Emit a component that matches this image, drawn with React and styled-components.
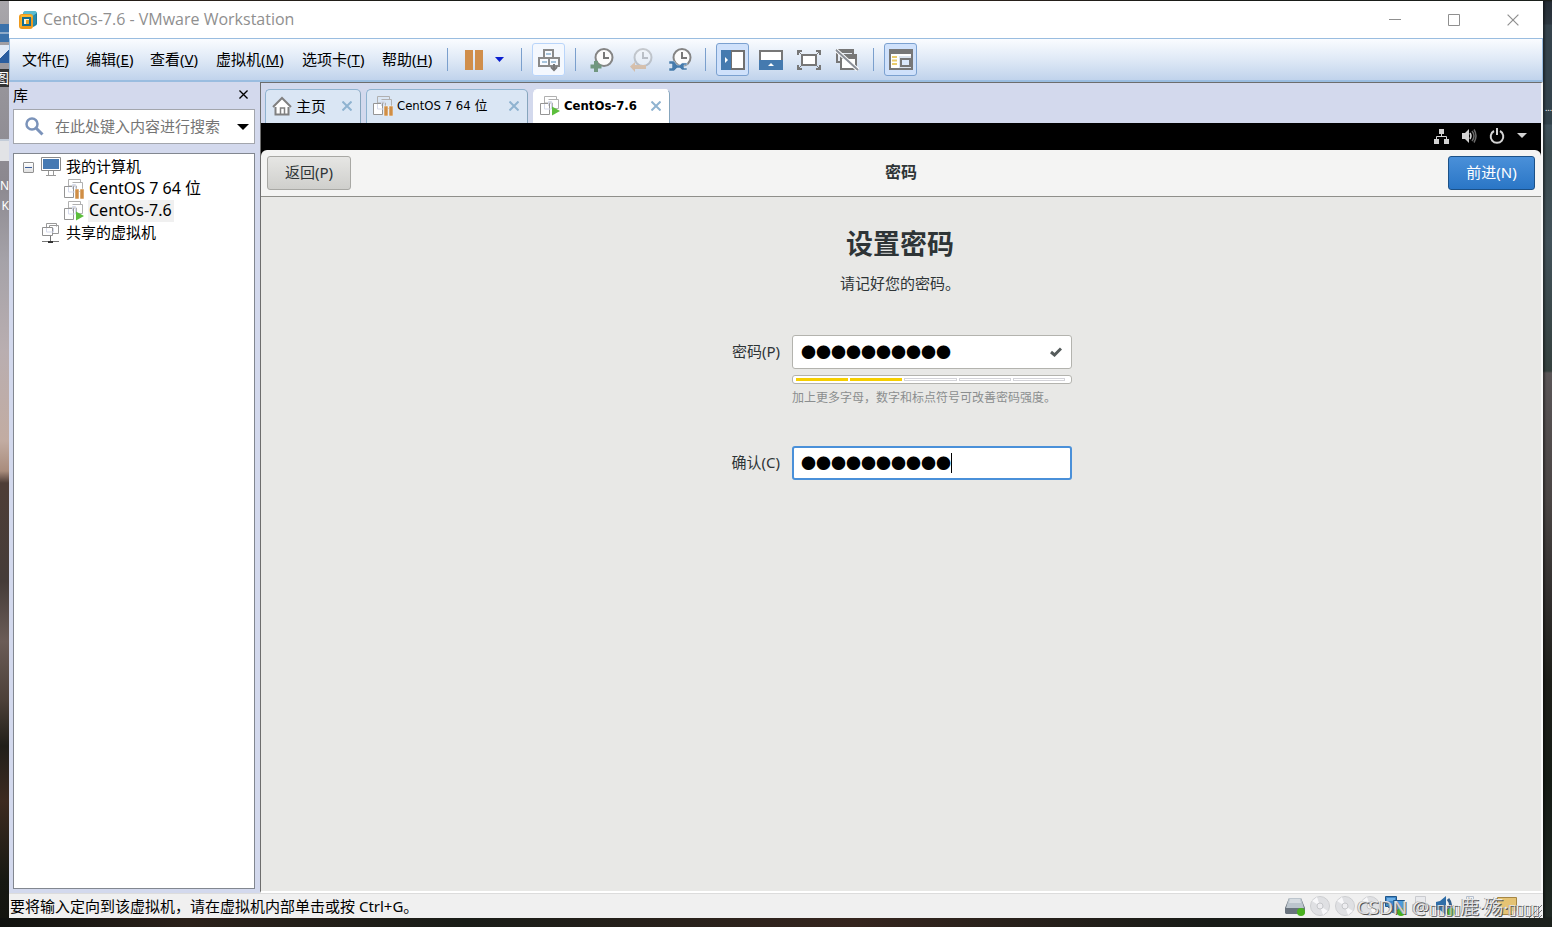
import React from 'react';
import styled, { createGlobalStyle, css } from 'styled-components';

const ui = `"Noto Sans", "Noto Sans CJK SC", sans-serif`;
const tabFont = `"DejaVu Sans Condensed", "Noto Sans CJK SC", sans-serif`;

const GlobalStyle = createGlobalStyle`
  *, *::before, *::after { box-sizing: border-box; }
  body { margin: 0; font: 15px/20px ${ui}; color: #000; }
  button, input { font: inherit; color: inherit; margin: 0; }
  svg { display: block; flex: none; }
`;

const Desktop = styled.div`
  display: flex;
  min-height: 100vh;
  padding: 1px 0 9px;
  background: linear-gradient(90deg, #10120f 0%, #2b211a 12%, #191c17 30%, #35251e 55%, #181b17 78%, #1c211d 100%);
`;

const LeftStrip = styled.div`
  position: relative;
  flex: none;
  width: 9px;
  overflow: hidden;
  background: linear-gradient(180deg, #a9a7ab 0, #96949a 90px, #8b888f 180px, #a5a2a8 260px, #b9aeb0 350px, #c2aca2 440px, #a98c7c 470px,
    #4e3d37 482px, #453c38 580px, #6b5c57 640px, #4c4038 700px, #211f19 745px, #3d2a20 800px, #161812 880px, #14150f 100%);
`;

const RightStrip = styled.div`
  position: relative;
  flex: none;
  width: 9px;
  overflow: hidden;
  background: linear-gradient(180deg, #252d36 0, #2d3740 23px, #35434c 24px, #33434c 123px, #40515b 124px, #3b4b4f 152px,
    #42525a 240px, #35413f 370px, #5a5557 372px, #4a4544 500px, #33302f 590px, #1d1e19 680px, #151b15 780px, #1f2823 100%);
  box-shadow: inset 2px 0 2px rgba(0, 0, 0, .4);
`;

const Fragment = styled.span`
  position: absolute;
  right: 0;
  top: ${p => p.$top}px;
  font-size: ${p => p.$size || 12}px;
  line-height: 18px;
  color: #fff;
  background: ${p => p.$bg || 'none'};
`;

const Patch = styled.span`
  position: absolute;
  left: 0;
  top: ${p => p.$top}px;
  width: 9px;
  height: ${p => p.$height}px;
  background: ${p => p.$fill};
`;

const Window = styled.main`
  display: flex;
  flex: 1;
  flex-direction: column;
  min-width: 0;
  background: #f0f0f0;
`;

const TitleBar = styled.header`
  display: flex;
  align-items: center;
  height: 37px;
  padding: 0 3px 0 9px;
  gap: 5px;
  background: #fff;
  color: #8f8f8f;
`;

const Title = styled.h1`
  flex: 1;
  margin: 0;
  padding-bottom: 2px;
  font: 400 16px/20px "Open Sans", ${ui};
`;

const CaptionButton = styled.button`
  display: grid;
  place-items: center;
  width: 54px;
  height: 36px;
  padding: 0;
  border: 0;
  background: none;
`;

const MenuBar = styled.nav`
  display: flex;
  align-items: center;
  height: 44px;
  padding-left: 12px;
  border: solid #9abde0;
  border-width: 1px 1px 2px 1px;
  background: linear-gradient(#fafcff, #dfe9f6 50%, #c0d3ec);
`;

const Menus = styled.div`
  display: flex;
  gap: 16px;
`;

const MenuButton = styled.button`
  width: ${p => p.$width}px;
  padding: 0 0 2px;
  border: 0;
  background: none;
  text-align: left;
  white-space: nowrap;
`;

const Separator = styled.span`
  flex: none;
  width: 1px;
  height: 23px;
  margin: 0 ${p => p.$after}px 0 ${p => p.$before}px;
  background: #7a9fcd;
`;

const ToolGroup = styled.div`
  display: flex;
  gap: ${p => p.$gap}px;
`;

const ToolButton = styled.button`
  display: grid;
  place-items: center;
  width: ${p => p.$width || 33}px;
  height: 33px;
  padding: 0;
  border: 1px solid transparent;
  border-radius: 3px;
  background: none;
  ${p => p.$look === 'hover' && css`border-color: #b9d5fa; background: #f4f8fe;`}
  ${p => p.$look === 'on' && css`border-color: #7ba1d0; background: #cfe1fb;`}
`;

const Body = styled.div`
  display: flex;
  flex: 1;
`;

const Sidebar = styled.aside`
  display: flex;
  flex: none;
  flex-direction: column;
  width: 251px;
  padding: 0 5px 4px 4px;
  background: #d3d9ed;
`;

const SidebarHead = styled.div`
  display: flex;
  align-items: center;
  justify-content: space-between;
  height: 27px;
  padding: 0 7px 2px 0;
`;

const PlainButton = styled.button`
  display: grid;
  place-items: center;
  flex: none;
  padding: 0;
  border: 0;
  background: none;
`;

const SearchBox = styled.label`
  display: flex;
  align-items: center;
  height: 35px;
  padding: 0 5px 0 11px;
  gap: 11px;
  border: 1px solid #a3a6ad;
  background: #fff;
`;

const SearchInput = styled.input`
  flex: 1;
  min-width: 0;
  padding: 0 0 2px;
  border: 0;
  outline: 0;
  background: none;
  &::placeholder { color: #757575; opacity: 1; }
`;

const Tree = styled.ul`
  flex: 1;
  margin: 9px 0 0;
  padding: 2px 0 0 9px;
  border: 1px solid #828790;
  background: #fff;
  list-style: none;
`;

const Branch = styled.ul`
  margin: 0;
  padding: 0;
  list-style: none;
`;

const TreeRow = styled.div`
  display: flex;
  align-items: center;
  height: 22px;
  gap: 4px;
  padding-left: ${p => p.$indent}px;
`;

const TreeLabel = styled.span`
  padding: 0 2px 2px 1px;
  font-size: ${p => (p.$latin ? 16 : 15)}px;
  white-space: nowrap;
  background: ${p => (p.$selected ? '#f0f0f0' : 'none')};
`;

const Expander = styled.button`
  display: grid;
  place-items: center;
  width: 11px;
  height: 11px;
  margin-right: 3px;
  padding: 0;
  border: 1px solid #919191;
  border-radius: 1px;
  background: linear-gradient(#fff, #e0e0e0);
  &::after { content: ''; width: 7px; height: 1px; background: #3d5f9c; }
`;

const Workspace = styled.section`
  display: flex;
  flex: 1;
  flex-direction: column;
  min-width: 0;
  border: solid #6d6d6d;
  border-width: 1px 2px 2px 1px;
  border-right-color: #f8f8f8;
  border-bottom-color: #fff;
  background: #d3d9ed;
`;

const Tabs = styled.div`
  display: flex;
  align-items: flex-end;
  height: 40px;
  padding-left: 4px;
  gap: 5px;
`;

const Tab = styled.div`
  display: flex;
  align-items: center;
  width: ${p => p.$width}px;
  height: 34px;
  padding: 0 8px 2px 6px;
  border: 1px solid ${p => (p.$active ? '#fff' : '#8eb2cf')};
  border-right-color: #86a5bd;
  border-bottom: 0;
  border-radius: 5px 5px 0 0;
  background: ${p => (p.$active ? '#fff' : '#dae6f4')};
`;

const TabLabel = styled.button`
  display: flex;
  align-items: center;
  flex: 1;
  padding: 0;
  gap: 4px;
  border: 0;
  background: none;
  font-family: ${p => (p.$cjk ? ui : tabFont)};
  font-size: ${p => (p.$cjk ? 15 : 13)}px;
  font-weight: ${p => (p.$bold ? 700 : 400)};
  white-space: nowrap;
`;

const Guest = styled.div`
  display: flex;
  flex: 1;
  flex-direction: column;
  background: #e8e8e6;
  color: #2e3436;
`;

const GuestPanel = styled.div`
  display: flex;
  align-items: center;
  justify-content: flex-end;
  height: 27px;
  padding: 0 14px 2px 0;
  gap: 12px;
  background: #000;
`;

const HeaderWrap = styled.div`
  background: #000;
`;

const HeaderBar = styled.div`
  display: grid;
  grid-template-columns: 1fr auto 1fr;
  align-items: center;
  height: 47px;
  padding: 0 6px;
  border-bottom: 1px solid #8f8f8a;
  border-radius: 6px 6px 0 0;
  background: #f4f4f3;
`;

const HeaderTitle = styled.h2`
  margin: 0;
  padding-bottom: 2px;
  font-size: 16px;
  line-height: 20px;
`;

const PushButton = styled.button`
  justify-self: ${p => (p.$primary ? 'end' : 'start')};
  width: ${p => (p.$primary ? 87 : 84)}px;
  height: 34px;
  padding: 0 0 2px;
  border: 1px solid ${p => (p.$primary ? '#1c5187' : '#a8a8a4')};
  border-radius: 3px;
  background: ${p => (p.$primary ? 'linear-gradient(#4a90d9, #2a76c6)' : 'linear-gradient(#e6e6e4, #cfcfcc)')};
  color: ${p => (p.$primary ? '#fff' : '#2e3436')};
`;

const Form = styled.form`
  display: flex;
  flex: 1;
  flex-direction: column;
  align-items: center;
  padding: 27px 2px 0 0;
`;

const Heading = styled.h3`
  margin: 0;
  font-size: 27px;
  line-height: 40px;
`;

const Lead = styled.p`
  margin: 9px 0 42px;
  line-height: 20px;
`;

const Fields = styled.div`
  display: grid;
  grid-template-columns: 52px 280px;
  column-gap: 12px;
  align-items: center;
`;

const FieldLabel = styled.label`
  justify-self: end;
  padding-bottom: 2px;
  white-space: nowrap;
`;

const Entry = styled.div`
  position: relative;
  display: flex;
  align-items: center;
  height: 34px;
  padding: 0 9px 0 ${p => (p.$focus ? 7 : 8)}px;
  border: ${p => (p.$focus ? '2px solid #4a90d9' : '1px solid #b3b3ae')};
  border-radius: 3px;
  background: #fff;
`;

const Secret = styled.input`
  flex: 1;
  min-width: 0;
  padding: 0;
  border: 0;
  outline: 0;
  background: none;
  color: #000;
  font: 15px/20px "Noto Sans CJK SC", sans-serif;
`;

const Caret = styled.span`
  position: absolute;
  left: 157px;
  top: 5px;
  width: 1px;
  height: 20px;
  background: #000;
`;

const Strength = styled.div`
  display: flex;
  grid-column: 2;
  height: 9px;
  margin-top: 6px;
  padding: 2px 6px 2px 3px;
  gap: 2px;
  border: 1px solid #b3b3ae;
  border-radius: 3px;
  background: #fff;
`;

const Step = styled.span`
  flex: 1;
  height: 3px;
  border: 1px solid ${p => (p.$on ? '#f5ce00' : '#d3d3d8')};
  background: ${p => (p.$on ? '#f5ce00' : '#fff')};
`;

const Hint = styled.p`
  grid-column: 2;
  margin: 5px 0 39px;
  font-size: 12px;
  line-height: 18px;
  color: #8b8e8f;
  white-space: nowrap;
`;

const StatusBar = styled.footer`
  display: flex;
  align-items: center;
  justify-content: space-between;
  position: relative;
  height: 25px;
  padding: 0 1px;
  border-top: 1px solid #dcdcdc;
  background: #f0f0f0;
`;

const Devices = styled.div`
  display: flex;
  flex: 1;
  justify-content: flex-end;
  align-items: center;
  margin-right: 17px;
  gap: 5px;
`;

const Grip = styled.div`
  align-self: flex-end;
  margin-left: 12px;
`;

const Watermark = styled.span`
  position: absolute;
  right: 4px;
  top: 1px;
  font: 19px/24px "Open Sans", "Noto Sans CJK SC", "DejaVu Sans", sans-serif;
  color: rgba(255, 255, 255, .75);
  text-shadow: 1px 1px 0 #555, -1px 0 0 #aaa;
  white-space: nowrap;
`;

const Boxes = styled.span`
  font-size: 14px;
`;

const Logo = () => (
  <svg width="20" height="20" viewBox="0 0 20 20">
    <rect x="5" y="1" width="14" height="15" rx="3" fill="#38a0bd" />
    <path d="M5 4 7 1h10l2 2v10l-3 4" fill="#5cbcd0" />
    <path d="M15 6v11l4-3V3z" fill="#1e7898" />
    <rect x="1" y="4" width="14" height="15" rx="3" fill="#ef9a1c" />
    <path d="M3 5h10l2 2-2 1H5v8l-3 1z" fill="#fbb62c" />
    <path d="M15 6v10l3-2V4z" fill="#2b8cab" />
    <path d="M5 8h7v7H5z" fill="#fff6d8" stroke="#146d91" strokeWidth="2" />
    <path d="M8 10h3v4H8z" fill="#efa726" />
  </svg>
);

const VmIcon = ({ state }) => (
  <svg width="20" height="20" viewBox="0 0 20 20" fill="none">
    <path d="M4.500 7V.5h12v3M8.500 3.500h10v9h-6M4.500 7h8v7" stroke="#b0b0b0" />
    <path d="M.5 7.500h9v11H.5z" fill="#fff" stroke="#959595" />
    <path d="M4.500 8v5h7V5.500h-3V10" stroke="#d5daeb" />
    {state === 'paused' && <path d="M11 10h4v10h-4zM16 10h4v10h-4z" fill="#d08e45" stroke="#fff" strokeWidth=".5" />}
    {state === 'running' && <path d="M12 10.500v9l8-4.500z" fill="#5cbe3c" />}
  </svg>
);

const SharedIcon = () => (
  <svg width="20" height="20" viewBox="0 0 20 20" fill="none">
    <path d="M5.500 4V.5h10v3" stroke="#999" />
    <path d="M8.500 2.500h9v8h-9z" stroke="#999" />
    <path d="M1.500 4.500h10v8h-10z" fill="#fff" stroke="#909090" />
    <path d="M5.500 5v4h7V5" stroke="#d5daeb" />
    <path d="M9.500 13v5M1 18.500h17" stroke="#777" />
    <path d="M7 18h5v2H7z" fill="#333" />
  </svg>
);

const MonitorIcon = () => (
  <svg width="20" height="20" viewBox="0 0 20 20">
    <path d="M.5.5h19v13H.5z" fill="#fff" stroke="#8a8a8a" />
    <path d="M2 2h16v10H2z" fill="#4679b2" />
    <path d="M7.500 14v4M12.500 14v4M5 18.500h10" stroke="#999" />
  </svg>
);

const HomeIcon = () => (
  <svg width="20" height="20" viewBox="0 0 20 20" fill="none" stroke="#808080">
    <path d="M3.500 10v8.500h13V10" fill="#fff" strokeWidth="2" />
    <path d="M1 11 10 2l9 9" fill="#fff" strokeWidth="2" />
    <path d="M8.500 18v-6h4v6" strokeWidth="1.500" />
  </svg>
);

const CloseGlyph = ({ size = 10, color = '#8fb3d0', w = 2 }) => (
  <svg width={size} height={size} viewBox="0 0 10 10" stroke={color} strokeWidth={w}><path d="m.5.5 9 9m0-9-9 9" /></svg>
);

const Clock = ({ kind }) => (
  <svg width="24" height="24" viewBox="0 0 24 24" fill="none" opacity={kind === 'revert' ? 0.38 : 1}>
    <circle cx="14" cy="9.500" r="8.500" fill="#fbfbfb" stroke="#858585" strokeWidth="2" />
    <path d="M14 4v6h5" stroke="#777" strokeWidth="2" />
    {kind === 'take' && <path d="M6 13v11M.5 18.500h11" stroke="#719780" strokeWidth="4" />}
    {kind === 'revert' && <path d="m1 18.500 5-4.500v3h11v4H6v3z" fill="#d88a3d" />}
    {kind === 'manage' && <path d="M1 13h5l3 4h3l2-2h5v2h-3v3h3v2h-5l-2-2H9l-3 3H1v-3h3v-4H1z" fill="#467bac" stroke="#dfe9f6" strokeWidth=".5" />}
  </svg>
);

const SendKeys = () => (
  <svg width="22" height="24" viewBox="0 0 22 24" fill="#f9fbff" stroke="#8a8a8a" strokeWidth="2">
    <path d="M6 2h9v8H6zM1 10h10v8H1zM11 10h10v8H11z" />
    <path d="M8 6h5M4 14h5M13 14h5" stroke="#a7c4dc" />
    <path d="M16 16v6m-3-3 3 3 3-3" fill="none" stroke="#777" />
  </svg>
);

const SidePanelIcon = () => (
  <svg width="24" height="20" viewBox="0 0 24 20">
    <path d="M1 1h22v18H1z" fill="#fff" stroke="#707070" strokeWidth="2" />
    <path d="M0 0h10v20H0z" fill="#457aaf" /><path d="M10.500 1v18" stroke="#707070" />
    <path d="m4 7 3 3-3 3z" fill="#fff" />
  </svg>
);

const ThumbBarIcon = () => (
  <svg width="24" height="20" viewBox="0 0 24 20">
    <path d="M1 1h22v18H1z" fill="#fff" stroke="#777" strokeWidth="2" />
    <path d="M0 10h24v10H0z" fill="#457aaf" /><path d="m9 16 3-3 3 3z" fill="#fff" />
  </svg>
);

const FullScreenIcon = () => (
  <svg width="24" height="20" viewBox="0 0 24 20" fill="none" stroke="#777" strokeWidth="2">
    <path d="M5 5h14v10H5z" fill="#fff" />
    <path d="M1 5V1h4M19 1h4v4M23 15v4h-4M5 19H1v-4" />
    <path d="m1 1 4 4M23 1l-4 4M1 19l4-4M23 19l-4-4" strokeWidth="1" />
  </svg>
);

const UnityIcon = () => (
  <svg width="24" height="22" viewBox="0 0 24 22" fill="none">
    <path d="M2 1h16v12H2z" fill="#e5eaf2" stroke="#777" strokeWidth="2" /><path d="M1 0h18v4H1z" fill="#777" />
    <path d="M6 7h15v13H6z" fill="#fff" stroke="#777" strokeWidth="2" /><path d="M5 5h17v5H5z" fill="#777" />
    <path d="m1 1 22 20" stroke="#fff" strokeWidth="4" /><path d="m1 1 22 20" stroke="#8a8f98" strokeWidth="2" />
  </svg>
);

const ConsoleIcon = () => (
  <svg width="24" height="21" viewBox="0 0 24 21" fill="none">
    <path d="M1 1h22v19H1z" fill="#fff" stroke="#777" strokeWidth="2" /><path d="M0 0h24v5H0z" fill="#777" />
    <path d="M3 8h5M3 11.500h5M3 15h5" stroke="#eacb6b" strokeWidth="2" />
    <path d="M10 7h12v12H10z" fill="#dce4ef" /><path d="M12 10h9v7h-9z" fill="#dbe8fb" stroke="#777" strokeWidth="2" />
  </svg>
);

const NetworkIcon = () => (
  <svg width="16" height="16" viewBox="0 0 16 16"><path d="M6 1h5v5H6zM1 11h5v5H1zM11 11h5v5h-5z" fill="#d3d3d3" /><path d="M8.500 5v4M3.500 11V8.500h10V11" fill="none" stroke="#d3d3d3" /></svg>
);
const VolumeIcon = () => (
  <svg width="16" height="16" viewBox="0 0 16 16" fill="none"><path d="M1 5h3l4-4v14l-4-4H1z" fill="#d3d3d3" /><path d="M9 5q2 3 0 6" stroke="#d3d3d3" strokeWidth="1.500" /><path d="M11 3q4 5 0 10M13 1.500q4 6.500 0 13" stroke="#6b6b6b" strokeWidth="1.500" /></svg>
);
const PowerIcon = () => (
  <svg width="16" height="16" viewBox="0 0 16 16" fill="none" stroke="#d3d3d3" strokeWidth="2"><path d="M5 3a6.300 6.300 0 1 0 6 0M8 0v7" /></svg>
);
const Down = ({ w, h, color }) => (
  <svg width={w} height={h} viewBox="0 0 10 5" preserveAspectRatio="none"><path d="M0 0h10L5 5z" fill={color} /></svg>
);

const Disk = () => (
  <svg width="20" height="20" viewBox="0 0 20 20"><path d="M4 2h12l4 10v5l-1 1H1l-1-1v-5z" fill="#69737d" /><path d="M4 2h12l3 10H1z" fill="#bcc5cd" /><path d="M5 3h10l1 4H4z" fill="#d6dce1" /><circle cx="16" cy="16" r="4" fill="#49b01f" /></svg>
);
const Disc = () => (
  <svg width="20" height="20" viewBox="0 0 20 20"><circle cx="10" cy="10" r="9.500" fill="#dfe0e3" stroke="#cdced1" /><path d="M10 10 2 5l5-4zM10 10l8 5-5 4z" fill="#f8f8fa" /><circle cx="10" cy="10" r="3" fill="#ededf0" stroke="#c6c7cb" /></svg>
);
const Net = () => (
  <svg width="20" height="20" viewBox="0 0 20 20"><path d="M.5.5h11v10H.5z" fill="#3f86c7" stroke="#1f568a" /><path d="M2 2h8v3H2z" fill="#6fb0e6" /><path d="M3 11h5v5h3" stroke="#4d6c8c" strokeWidth="2" fill="none" /><path d="M8.500 4.500h11v10h-11z" fill="#4e9bdc" stroke="#1f568a" /><path d="M10 17h8" stroke="#567" strokeWidth="2" /><circle cx="16" cy="16" r="4" fill="#49b01f" /></svg>
);
const Printer = () => (
  <svg width="20" height="20" viewBox="0 0 20 20" fill="#e9eaed" stroke="#cacbcf"><path d="M5.500.5h10v8h-10zM2.500 8.500h15v7h-15zM5.500 12.500h10v6h-10z" /></svg>
);
const Sound = () => (
  <svg width="20" height="20" viewBox="0 0 20 20"><path d="M5 5 11 0v19l-6-5H1V6z" fill="#2f6ea8" /><path d="M13 3q5 6 0 12" stroke="#34608c" strokeWidth="3" fill="none" /><circle cx="16" cy="16" r="4" fill="#49b01f" /></svg>
);
const Usb = () => (
  <svg width="20" height="20" viewBox="0 0 20 20"><path d="M6.500.5h7v6h-7z" fill="#eef1f6" stroke="#b6bfcc" /><path d="M5.500 6.500h10v13h-10z" fill="#cad5e4" stroke="#a2b0c4" /></svg>
);
const Note = () => (
  <svg width="20" height="18" viewBox="0 0 20 18"><path d="M.5.5h19v13l-4 4H.5z" fill="#e5c374" stroke="#a68644" /><path d="M15 18v-4h5" fill="#f6e0a6" /></svg>
);

const menus = [['文件', 'F', 48], ['编辑', 'E', 48], ['查看', 'V', 50], ['虚拟机', 'M', 70], ['选项卡', 'T', 64], ['帮助', 'H', 52]];
const dots = '●'.repeat(10);

export default function App() {
  return (
    <>
      <GlobalStyle />
      <Desktop>
        <LeftStrip aria-hidden="true">
          <Patch $top={23} $height={18} $fill="linear-gradient(#3b72ab 0 8px, #8eaac8 8px 10px, #3b72ab 10px)" />
          <Patch $top={44} $height={18} $fill="linear-gradient(135deg, #dfe9f6 0 50%, #2b5e9f 50%)" />
          <Fragment $top={68} $size={14} $bg="#333">图</Fragment>
          <Patch $top={138} $height={22} $fill="linear-gradient(#c3ccd8 0 2px, #e2e3e6 2px)" />
          <Fragment $top={176}>N</Fragment>
          <Fragment $top={196}>K</Fragment>
        </LeftStrip>
        <Window>
          <TitleBar>
            <Logo />
            <Title>CentOs-7.6 - VMware Workstation</Title>
            <CaptionButton aria-label="最小化"><svg width="12" height="12" stroke="#8f8f8f"><path d="M0 5.500h12" /></svg></CaptionButton>
            <CaptionButton aria-label="最大化"><svg width="12" height="12" fill="none" stroke="#8f8f8f"><path d="M.5.5h11v11H.5z" /></svg></CaptionButton>
            <CaptionButton aria-label="关闭"><CloseGlyph size={12} color="#8f8f8f" w={1} /></CaptionButton>
          </TitleBar>

          <MenuBar>
            <Menus>
              {menus.map(([name, key, width]) => <MenuButton key={key} $width={width}>{name}(<u>{key}</u>)</MenuButton>)}
            </Menus>
            <Separator $before={13} $after={16} />
            <ToolGroup $gap={4}>
              <ToolButton $width={20} aria-label="挂起"><svg width="18" height="20" fill="#d08e4b"><path d="M0 0h8v20H0zM10 0h8v20h-8z" /></svg></ToolButton>
              <ToolButton $width={22} aria-label="电源选项"><Down w={9} h={5} color="#0a1ed0" /></ToolButton>
            </ToolGroup>
            <Separator $before={11} $after={10} />
            <ToolButton $look="hover" aria-label="发送按键"><SendKeys /></ToolButton>
            <Separator $before={10} $after={9} />
            <ToolGroup $gap={6}>
              <ToolButton aria-label="拍摄快照"><Clock kind="take" /></ToolButton>
              <ToolButton aria-label="恢复快照" disabled><Clock kind="revert" /></ToolButton>
              <ToolButton aria-label="管理快照"><Clock kind="manage" /></ToolButton>
            </ToolGroup>
            <Separator $before={9} $after={10} />
            <ToolGroup $gap={5}>
              <ToolButton $look="on" aria-label="显示库"><SidePanelIcon /></ToolButton>
              <ToolButton aria-label="缩略图栏"><ThumbBarIcon /></ToolButton>
              <ToolButton aria-label="全屏"><FullScreenIcon /></ToolButton>
              <ToolButton aria-label="Unity"><UnityIcon /></ToolButton>
            </ToolGroup>
            <Separator $before={10} $after={10} />
            <ToolButton $look="on" aria-label="控制台视图"><ConsoleIcon /></ToolButton>
          </MenuBar>

          <Body>
            <Sidebar>
              <SidebarHead>
                <span>库</span>
                <PlainButton aria-label="关闭库"><CloseGlyph size={9} color="#000" w={1.5} /></PlainButton>
              </SidebarHead>
              <SearchBox>
                <svg width="19" height="19" viewBox="0 0 19 19" fill="none" stroke="#7b93ba"><circle cx="7" cy="7" r="5.500" strokeWidth="2.500" /><path d="m11 11 6.500 6.500" strokeWidth="3" /></svg>
                <SearchInput type="text" aria-label="搜索" placeholder="在此处键入内容进行搜索" />
                <PlainButton aria-label="搜索选项"><Down w={12} h={6} color="#000" /></PlainButton>
              </SearchBox>
              <Tree>
                <li>
                  <TreeRow $indent={0}><Expander aria-label="折叠" /><MonitorIcon /><TreeLabel>我的计算机</TreeLabel></TreeRow>
                  <Branch>
                    <li><TreeRow $indent={41}><VmIcon state="paused" /><TreeLabel $latin>CentOS 7 64 位</TreeLabel></TreeRow></li>
                    <li><TreeRow $indent={41}><VmIcon state="running" /><TreeLabel $latin $selected>CentOs-7.6</TreeLabel></TreeRow></li>
                  </Branch>
                </li>
                <li><TreeRow $indent={18}><SharedIcon /><TreeLabel>共享的虚拟机</TreeLabel></TreeRow></li>
              </Tree>
            </Sidebar>

            <Workspace>
              <Tabs>
                <Tab $width={96}><TabLabel $cjk><HomeIcon />主页</TabLabel><PlainButton aria-label="关闭主页"><CloseGlyph /></PlainButton></Tab>
                <Tab $width={162}><TabLabel><VmIcon state="paused" />CentOS 7 64 位</TabLabel><PlainButton aria-label="关闭 CentOS 7 64 位"><CloseGlyph /></PlainButton></Tab>
                <Tab $width={137} $active><TabLabel $bold><VmIcon state="running" />CentOs-7.6</TabLabel><PlainButton aria-label="关闭 CentOs-7.6"><CloseGlyph /></PlainButton></Tab>
              </Tabs>
              <Guest>
                <GuestPanel><NetworkIcon /><VolumeIcon /><PowerIcon /><Down w={10} h={5} color="#d3d3d3" /></GuestPanel>
                <HeaderWrap>
                  <HeaderBar>
                    <PushButton type="button">返回(P)</PushButton>
                    <HeaderTitle>密码</HeaderTitle>
                    <PushButton type="button" $primary>前进(N)</PushButton>
                  </HeaderBar>
                </HeaderWrap>
                <Form>
                  <Heading>设置密码</Heading>
                  <Lead>请记好您的密码。</Lead>
                  <Fields>
                    <FieldLabel htmlFor="password">密码(P)</FieldLabel>
                    <Entry>
                      <Secret id="password" type="text" autoComplete="off" defaultValue={dots} />
                      <svg width="12" height="10" viewBox="0 0 12 10" fill="none" stroke="#555b5b" strokeWidth="3"><path d="m1 5 3.500 3L11 1.500" /></svg>
                    </Entry>
                    <Strength>{[1, 1, 0, 0, 0].map((on, i) => <Step key={i} $on={on} />)}</Strength>
                    <Hint>加上更多字母，数字和标点符号可改善密码强度。</Hint>
                    <FieldLabel htmlFor="confirm">确认(C)</FieldLabel>
                    <Entry $focus>
                      <Secret id="confirm" type="text" autoComplete="off" defaultValue={dots} />
                      <Caret />
                    </Entry>
                  </Fields>
                </Form>
              </Guest>
            </Workspace>
          </Body>

          <StatusBar>
            <span>要将输入定向到该虚拟机，请在虚拟机内部单击或按 Ctrl+G。</span>
            <Devices><Disk /><Disc /><Disc /><Disc /><Net /><Printer /><Sound /><Usb /></Devices>
            <Note />
            <Grip><svg width="13" height="13" stroke="#777"><path d="M0 13 13 0M5 13l8-8M10 13l3-3" /></svg></Grip>
            <Watermark>CSDN @<Boxes>▯▯▯▯</Boxes>鹿·殇·<Boxes>▯▯▯▯</Boxes></Watermark>
          </StatusBar>
        </Window>
        <RightStrip aria-hidden="true"><Fragment $top={98} $size={9}>…</Fragment></RightStrip>
      </Desktop>
    </>
  );
}
